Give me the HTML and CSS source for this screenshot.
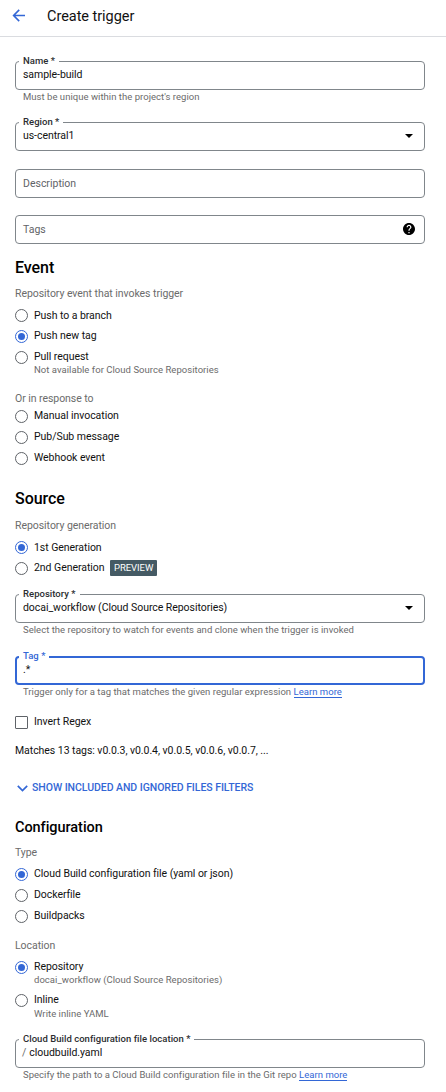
FILE: index.html
```html
<!DOCTYPE html>
<html lang="en">
<head>
<meta charset="utf-8">
<title>Create trigger</title>
<link rel="stylesheet" href="styles.css">
</head>
<body>
<header class="topbar">
  <svg class="back" viewBox="0 0 14 14" width="14" height="14"><path d="M13 6.500H1.800M7.200.900L1.600 6.500l5.600 5.600" fill="none" stroke="currentColor" stroke-width="1.600"/></svg>
  <h1 class="title">Create trigger</h1>
</header>
<main class="form">
  <div class="field"><span class="label">Name *</span><span class="value">sample-build</span></div>
  <p class="hint">Must be unique within the project's region</p>
  <div class="field field-region"><span class="label">Region *</span><span class="value">us-central1</span><svg class="arrow" viewBox="0 0 8 4" width="8" height="4"><path d="M0 0h8L4 4z"/></svg></div>
  <div class="field field-description"><span class="placeholder">Description</span></div>
  <div class="field field-tags"><span class="placeholder">Tags</span>
    <svg class="help" viewBox="2 2 20 20" width="12" height="12"><path d="M12 2C6.48 2 2 6.48 2 12s4.48 10 10 10 10-4.48 10-10S17.52 2 12 2zm1 17h-2v-2h2v2zm2.07-7.75l-.9.92C13.45 12.9 13 13.5 13 15h-2v-.5c0-1.1.45-2.1 1.17-2.83l1.24-1.26c.37-.36.59-.86.59-1.41 0-1.1-.9-2-2-2s-2 .9-2 2H8c0-2.21 1.79-4 4-4s4 1.79 4 4c0 .88-.36 1.68-.93 2.25z"/></svg></div>

  <h2 class="heading heading-event">Event</h2>
  <p class="caption caption-event">Repository event that invokes trigger</p>
  <div class="options">
    <label class="option"><i class="radio"></i><span class="text text-first">Push to a branch</span></label>
    <label class="option"><i class="radio checked"></i><span class="text">Push new tag</span></label>
    <label class="option"><i class="radio"></i><span class="text">Pull request</span></label>
  </div>
  <p class="subtext">Not available for Cloud Source Repositories</p>
  <p class="caption caption-response">Or in response to</p>
  <div class="options options-response">
    <label class="option"><i class="radio"></i><span class="text">Manual invocation</span></label>
    <label class="option"><i class="radio"></i><span class="text">Pub/Sub message</span></label>
    <label class="option"><i class="radio"></i><span class="text">Webhook event</span></label>
  </div>

  <h2 class="heading heading-source">Source</h2>
  <p class="caption caption-generation">Repository generation</p>
  <div class="options">
    <label class="option"><i class="radio checked"></i><span class="text text-first">1st Generation</span></label>
    <label class="option"><i class="radio"></i><span class="text">2nd Generation</span><span class="badge">PREVIEW</span></label>
  </div>
  <div class="field field-repository"><span class="label">Repository *</span><span class="value">docai_workflow (Cloud Source Repositories)</span><svg class="arrow" viewBox="0 0 8 4" width="8" height="4"><path d="M0 0h8L4 4z"/></svg></div>
  <p class="hint">Select the repository to watch for events and clone when the trigger is invoked</p>
  <div class="field field-tag"><span class="label">Tag *</span><span class="value">.*</span></div>
  <p class="hint">Trigger only for a tag that matches the given regular expression <a class="link">Learn more</a></p>
  <label class="option option-regex"><i class="checkbox"></i><span class="text">Invert Regex</span></label>
  <p class="matches">Matches 13 tags: v0.0.3, v0.0.4, v0.0.5, v0.0.6, v0.0.7, ...</p>
  <div class="expander"><svg viewBox="0 0 11 7" width="11" height="7"><path d="M.8.8l4.700 4.700L10.200.8" fill="none" stroke="currentColor" stroke-width="1.700"/></svg><span class="expander-text">SHOW INCLUDED AND IGNORED FILES FILTERS</span></div>

  <h3 class="heading heading-configuration">Configuration</h3>
  <p class="caption caption-type">Type</p>
  <div class="options options-type">
    <label class="option"><i class="radio checked"></i><span class="text">Cloud Build configuration file (yaml or json)</span></label>
    <label class="option"><i class="radio"></i><span class="text">Dockerfile</span></label>
    <label class="option"><i class="radio"></i><span class="text">Buildpacks</span></label>
  </div>
  <p class="caption caption-location">Location</p>
  <label class="option option-repository"><i class="radio checked"></i><span class="text">Repository</span></label>
  <p class="subtext subtext-repository">docai_workflow (Cloud Source Repositories)</p>
  <label class="option option-inline"><i class="radio"></i><span class="text">Inline</span></label>
  <p class="subtext">Write inline YAML</p>
  <div class="field field-file"><span class="label">Cloud Build configuration file location *</span><span class="prefix">/</span><span class="value">cloudbuild.yaml</span></div>
  <p class="hint">Specify the path to a Cloud Build configuration file in the Git repo <a class="link">Learn more</a></p>
</main>
</body>
</html>
```
FILE: styles.css
```css
* { box-sizing: border-box; }
body { margin: 0; background: #fff; color: #111; font-family: Roboto, "Liberation Sans", sans-serif; font-size: 10.5px; line-height: 14px; letter-spacing: -.05px; white-space: nowrap; }
h1, h2, h3, p { margin: 0; }
.topbar { display: flex; align-items: center; gap: 21px; height: 37px; padding: 0 0 4px 12px; border-bottom: 1px solid #dadce0; }
.back { color: #3367d6; }
.title { padding-top: 2px; font-size: 14.5px; font-weight: 400; line-height: 20px; letter-spacing: -.04px; }
.form { display: flex; flex-direction: column; padding: 24px 21px 0 15px; }
.field { position: relative; display: flex; align-items: center; height: 29px; padding: 0 10px 2px 7px; border: 1px solid #80868b; border-radius: 4px; }
.label { position: absolute; top: -7px; left: 3px; padding: 0 4px; background: #fff; color: #2b2d30; font-size: 9.5px; font-weight: 500; line-height: 12px; letter-spacing: .03px; }
.placeholder { padding-top: 2px; color: #5f6368; letter-spacing: 0; }
.arrow { margin-left: auto; margin-right: 1px; }
.help { margin-left: auto; margin-right: -1px; }
.hint { height: 14px; padding-left: 8px; color: #6b6b6b; font-size: 9.5px; letter-spacing: .03px; }
.link { color: #3367d6; border-bottom: 1px solid #3367d6; }
.field-region { margin-top: 18px; }
.field-description { margin-top: 18px; }
.field-tags { margin-top: 17px; }
.heading { color: #000; font-size: 16px; font-weight: 500; line-height: 20px; }
.heading-event { margin-top: 14px; }
.caption { color: #6b6b6b; }
.caption-event { margin-top: 9px; }
.options { display: flex; flex-direction: column; margin-top: 4px; }
.option { display: flex; align-items: center; height: 21px; }
.options .option:last-child { height: 20px; }
.text { margin-left: 6px; padding-bottom: 1px; }
.text-first { padding: 1px 0 0; }
.radio { display: flex; align-items: center; justify-content: center; width: 13px; height: 13px; border: 1px solid #5f6368; border-radius: 50%; }
.checked { border-color: #3367d6; }
.checked::after { content: ""; width: 7px; height: 7px; border-radius: 50%; background: #3367d6; }
.subtext { margin-top: -4px; padding-left: 19px; color: #6b6b6b; font-size: 9.5px; letter-spacing: .04px; }
.subtext-repository { margin-top: -5px; }
.caption-response { margin-top: 15px; }
.options-response { margin-top: 0; }
.heading-source { margin-top: 21px; }
.caption-generation { margin-top: 10px; }
.badge { height: 16px; margin-left: 6px; padding: 0 3.5px; border-radius: 1px; background: #455a64; color: #fff; font-size: 9.5px; line-height: 15px; }
.field-repository { margin-top: 16px; }
.field-tag { margin-top: 19px; padding-left: 6px; border: 2px solid #3367d6; }
.field-tag .label { top: -8px; left: 2px; color: #3367d6; }
.option-regex { margin-top: 13px; }
.checkbox { width: 13px; height: 13px; border: 1px solid #5f6368; border-radius: 1px; }
.matches { margin-top: 11px; }
.expander { display: flex; align-items: center; gap: 4px; margin-top: 23px; padding-left: 2px; color: #3367d6; font-weight: 500; }
.heading-configuration { margin-top: 23px; font-size: 14.5px; }
.caption-type { margin-top: 8px; }
.options-type { margin-top: 4px; }
.caption-location { margin-top: 13px; }
.option-repository { margin-top: 4px; }
.option-inline { margin-top: 3px; }
.field-file { margin-top: 18px; }
.prefix { margin-left: -1px; margin-right: 3px; color: #6b6b6b; }
```
